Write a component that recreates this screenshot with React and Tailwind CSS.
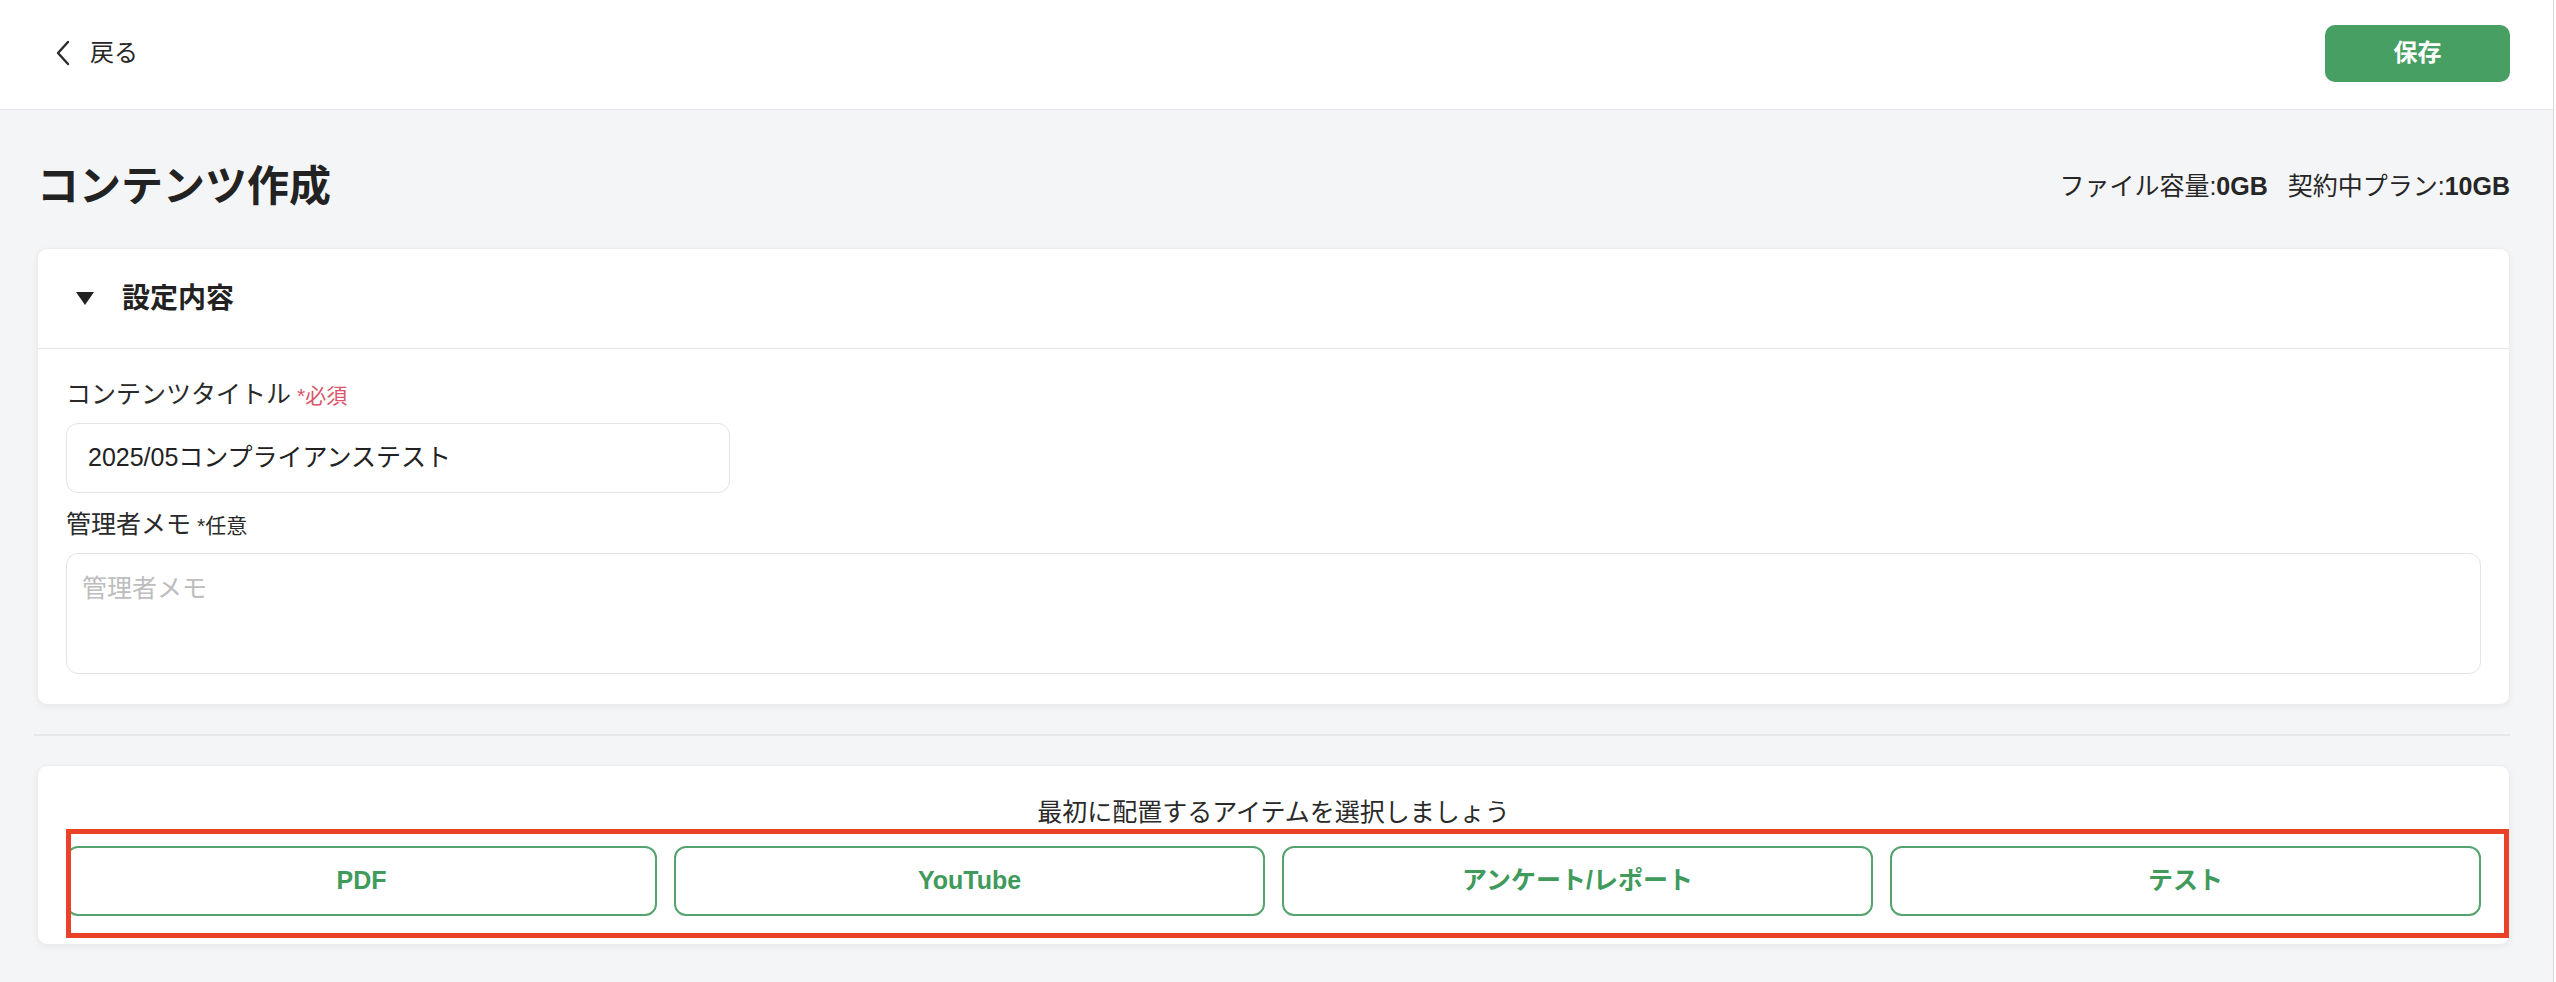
import React from "react";

function ChevronLeft() {
  return (
    <svg width="16" height="26" viewBox="0 0 16 26" fill="none">
      <polyline points="13,2 3,13 13,24" stroke="#2a2a2a" strokeWidth="2.4" strokeLinecap="round" strokeLinejoin="round" />
    </svg>
  );
}

function TriangleDown() {
  return (
    <svg width="18" height="14" viewBox="0 0 18 14">
      <polygon points="0,0 18,0 9,13" fill="#222" />
    </svg>
  );
}

export default function App() {
  const items = ["PDF", "YouTube", "アンケート/レポート", "テスト"];
  return (
    <div className="min-h-screen mr-[2px] border-r border-[#d6d7da] bg-[#f4f5f7] flex flex-col font-['Liberation_Sans','Noto_Sans_CJK_JP',sans-serif] text-[#262626]">
      <header className="h-[110px] bg-white border-b border-[#e4e5e9] flex items-center justify-between pl-[55px] pr-[43px] pb-[3px]">
        <button className="flex items-center gap-[19px] text-[24px] text-[#262626]">
          <ChevronLeft />
          <span>戻る</span>
        </button>
        <button className="w-[185px] h-[57px] rounded-[10px] bg-[#479f63] text-white text-[24px] font-bold">
          保存
        </button>
      </header>

      <main className="flex flex-col pl-[37px] pr-[43px] pb-[36px]">
        <div className="h-[138px] flex items-center justify-between pt-[16px]">
          <h1 className="text-[42px] font-bold text-[#222] leading-none">コンテンツ作成</h1>
          <div className="text-[25px] text-[#262626] flex items-center">
            <span>ファイル容量:</span>
            <span className="font-bold">0GB</span>
            <span className="ml-[20px]">契約中プラン:</span>
            <span className="font-bold">10GB</span>
          </div>
        </div>

        <section className="bg-white rounded-[10px] border border-[#ebecef] shadow-[0_2px_6px_rgba(0,0,0,0.06)]">
          <div className="h-[100px] flex items-center pl-[38px] gap-[28px] border-b border-[#e4e5e9]">
            <TriangleDown />
            <span className="text-[28px] font-bold text-[#222]">設定内容</span>
          </div>
          <div className="px-[28px] pt-[27px] pb-[30px] flex flex-col">
            <label className="text-[25px] leading-[36px] text-[#2a2a2a] flex items-baseline">
              コンテンツタイトル
              <span className="ml-[6px] text-[21px] text-[#d9566b]">*必須</span>
            </label>
            <div className="mt-[9px] w-[664px] h-[70px] rounded-[12px] border border-[#e2e3e7] flex items-center px-[21px] text-[25px] text-[#222]">
              2025/05コンプライアンステスト
            </div>
            <label className="mt-[13px] text-[25px] leading-[36px] text-[#2a2a2a] flex items-baseline">
              管理者メモ
              <span className="ml-[6px] text-[21px] text-[#2a2a2a]">*任意</span>
            </label>
            <div className="mt-[9px] h-[121px] rounded-[12px] border border-[#e2e3e7] px-[15px] pt-[16px]">
              <span className="text-[25px] leading-[36px] text-[#bdbdbd]">管理者メモ</span>
            </div>
          </div>
        </section>

        <div className="mt-[29px] h-[2px] bg-[#e6e7eb] -ml-[3px]"></div>

        <section className="relative mt-[29px] bg-white rounded-[10px] border border-[#ebecef] shadow-[0_2px_6px_rgba(0,0,0,0.06)] px-[28px] pt-[28px] pb-[28px]">
          <p className="text-center text-[25px] leading-[36px] text-[#2a2a2a]">最初に配置するアイテムを選択しましょう</p>
          <div className="mt-[16px] grid grid-cols-4 gap-[17px]">
            {items.map((t) => (
              <button
                key={t}
                className="h-[70px] rounded-[12px] border-2 border-[#55a36f] bg-white text-[25px] font-bold text-[#3f9a5c]"
              >
                {t}
              </button>
            ))}
          </div>
          <div className="absolute left-[28px] right-0 top-[63px] h-[109px] border-[5px] border-[#ea4228] pointer-events-none"></div>
        </section>
      </main>
    </div>
  );
}
